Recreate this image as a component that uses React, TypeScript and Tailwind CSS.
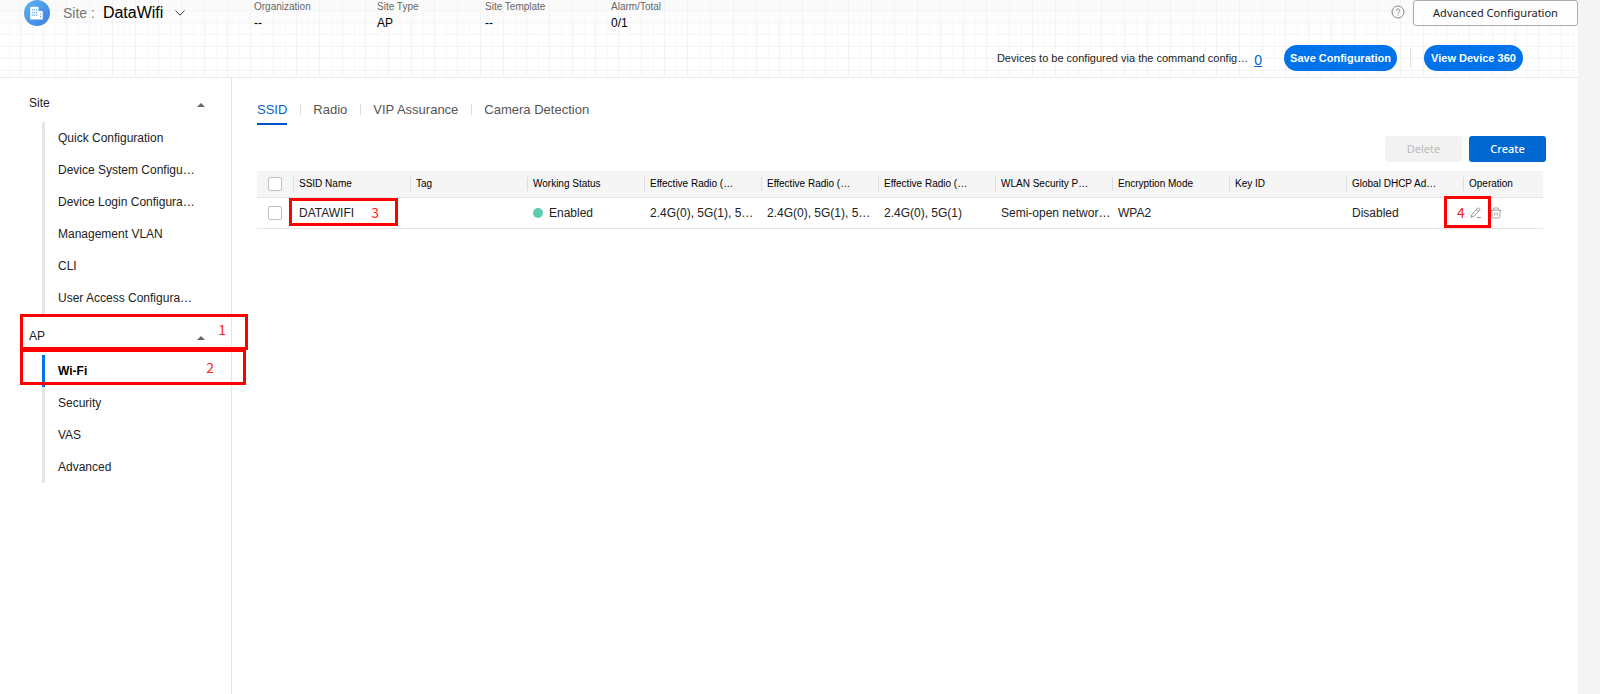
import { useState } from "react";
import type { ReactNode } from "react";

const facts = [
  { label: "Organization", value: "--", width: "w-[123px]" },
  { label: "Site Type", value: "AP", width: "w-[108px]" },
  { label: "Site Template", value: "--", width: "w-[126px]" },
  { label: "Alarm/Total", value: "0/1", width: "w-[100px]" },
];

const siteItems = [
  "Quick Configuration",
  "Device System Configu…",
  "Device Login Configura…",
  "Management VLAN",
  "CLI",
  "User Access Configura…",
];

const apItems = ["Wi-Fi", "Security", "VAS", "Advanced"];

const tabs = ["SSID", "Radio", "VIP Assurance", "Camera Detection"];

const columns = [
  "SSID Name",
  "Tag",
  "Working Status",
  "Effective Radio (…",
  "Effective Radio (…",
  "Effective Radio (…",
  "WLAN Security P…",
  "Encryption Mode",
  "Key ID",
  "Global DHCP Ad…",
  "Operation",
];

const gridLines =
  "bg-[linear-gradient(to_right,#f3f3f3_1px,transparent_1px),linear-gradient(to_right,#f8f8f8_1px,transparent_1px),linear-gradient(to_bottom,#f5f5f5_1px,transparent_1px),linear-gradient(to_bottom,#fafafa,#ffffff_50%)] bg-[size:23px_100%,23px_100%,100%_12px,100%_100%] bg-[position:20px_0,9px_0,0_10px,0_0]";

function SiteLogo() {
  return (
    <svg viewBox="0 0 26 26" className="size-[26px]" aria-hidden="true">
      <defs>
        <linearGradient id="logo" x1="0" y1="0" x2="1" y2="1">
          <stop offset="0" stopColor="#5fb4f0" />
          <stop offset="1" stopColor="#3a7ee4" />
        </linearGradient>
      </defs>
      <circle cx="13" cy="13" r="13" fill="url(#logo)" />
      <path d="M6.2 7.500q0-.8.800-.8h6.800q.8 0 .8.800v3.600h3.200q1 0 1 1v7.400H6.200z" fill="#fff" />
      <path
        d="M7.800 9.800h1.300M9.900 9.800h1.300M12 9.800h1.300M7.800 12.500h1.300M9.900 12.500h1.300M12 12.500h1.300M7.800 15.200h1.300M9.900 15.200h1.300M12 15.200h1.300M16 14h1.200M16 16.600h1.200"
        stroke="#5fa6ee"
        strokeWidth="1.200"
      />
    </svg>
  );
}

function HelpIcon() {
  return (
    <svg viewBox="0 0 14 14" className="size-[14px]" fill="none" stroke="#777" aria-hidden="true">
      <circle cx="7" cy="7" r="6" strokeWidth="0.900" />
      <path d="M5.200 5.600a1.800 1.700 0 1 1 2.700 1.500c-.6.400-.9.700-.9 1.400M7 9.600v1" strokeWidth="0.900" />
    </svg>
  );
}

function EditIcon() {
  return (
    <svg viewBox="0 0 12 12" className="size-3" fill="none" stroke="#888" strokeWidth="0.900" aria-hidden="true">
      <path d="M1.200 10.300l.8-2.900L7.600 1.200q.6-.6 1.200-.1l.8.700q.6.600.1 1.200L4 9.300zM6.600 2.500l2 1.800M6.800 10.500h4" />
    </svg>
  );
}

function TrashIcon() {
  return (
    <svg viewBox="0 0 12 12" className="size-3" fill="none" stroke="#999" strokeWidth="0.900" aria-hidden="true">
      <path d="M.8 3.200h10.400M3.500 3V1.800q0-.8.800-.8h3.400q.8 0 .8.800V3M1.700 3.200l.5 6.600q.1 1.200 1.200 1.200h5.200q1.100 0 1.200-1.200l.5-6.600M4.800 5.200v3.400M7.200 5.200v3.400" />
    </svg>
  );
}

function NavGroup({ title, children }: { title: string; children?: ReactNode }) {
  return (
    <button type="button" className="relative mb-px flex h-9 w-full items-center justify-between pr-[26px] pl-[29px] text-left text-xs text-[#222]">
      {title}
      <svg viewBox="0 0 8 4" className="mt-1 h-1 w-2" aria-hidden="true">
        <path d="M4 0l4 4H0z" fill="#666" />
      </svg>
      {children}
    </button>
  );
}

function Mark({ className, children }: { className: string; children: ReactNode }) {
  return (
    <span
      className={
        "pointer-events-none absolute z-10 border-[3px] border-[#ff0000] font-['Noto_Sans_CJK_SC',sans-serif] text-sm font-normal leading-4 text-[#ff2020] " +
        className
      }
    >
      {children}
    </span>
  );
}

function Check({ label }: { label: string }) {
  return (
    <input
      type="checkbox"
      aria-label={label}
      className="block size-[14px] appearance-none rounded-[2px] border border-[#c2c2c2] bg-white checked:bg-[#0067d1]"
    />
  );
}

export default function App() {
  const [tab, setTab] = useState("SSID");

  return (
    <div className="min-h-screen bg-[#f4f4f4] pr-[22px] font-['Liberation_Sans',Arial,sans-serif] text-xs text-[#222]">
      <div className="flex min-h-screen flex-col bg-white">
        <header className={"flex h-[78px] justify-between border-b border-[#e8e8e8] " + gridLines}>
          <div className="flex items-start">
            <div className="flex w-[254px] items-center pl-6">
              <SiteLogo />
              <span className="ml-[13px] text-sm text-[#777]">Site :</span>
              <button type="button" className="ml-2 flex items-center gap-3 text-base leading-6 text-black">
                DataWifi
                <svg viewBox="0 0 10 6" className="h-[6px] w-[10px]" fill="none" stroke="#444" aria-hidden="true">
                  <path d="M.5.500L5 5.200 9.500.500" />
                </svg>
              </button>
            </div>
            <dl className="flex">
              {facts.map((f) => (
                <div key={f.label} className={f.width}>
                  <dt className="text-[10px] leading-[13px] text-[#666]">{f.label}</dt>
                  <dd className="mt-[2px] text-xs leading-4 text-black">{f.value}</dd>
                </div>
              ))}
            </dl>
          </div>
          <div className="flex flex-col items-end">
            <div className="flex items-start gap-2">
              <button type="button" aria-label="Help" className="mt-[5px]">
                <HelpIcon />
              </button>
              <button
                type="button"
                className="h-[26px] w-[165px] rounded-[3px] border border-[#aaa] bg-white/60 font-['Noto_Sans',sans-serif] text-[11px] leading-5 text-[#222]"
              >
                Advanced Configuration
              </button>
            </div>
            <div className="mt-[19px] mr-[55px] flex items-center">
              <span className="text-[11px] whitespace-nowrap">Devices to be configured via the command config…</span>
              <a href="#devices" className="ml-[6px] pt-1 text-sm text-[#0067d1] underline">
                0
              </a>
              <button type="button" className="ml-[22px] h-[26px] w-[113px] rounded-full bg-[#0073ea] text-[11px] font-bold text-white">
                Save Configuration
              </button>
              <span className="ml-[13px] h-5 w-px bg-[#e0e0e0]" />
              <button type="button" className="ml-[13px] h-[26px] w-[99px] rounded-full bg-[#0073ea] text-[11px] font-bold text-white">
                View Device 360
              </button>
            </div>
          </div>
        </header>

        <div className="flex grow">
          <nav className="w-[232px] shrink-0 border-r border-[#e5e5e5] pt-[7px]">
            <NavGroup title="Site" />
            <ul className="ml-[42px] border-l-[3px] border-[#e5e5e5]">
              {siteItems.map((item) => (
                <li key={item}>
                  <a href="#site" className="block pl-[13px] leading-8 whitespace-nowrap">
                    {item}
                  </a>
                </li>
              ))}
            </ul>
            <div className="h-1" />
            <NavGroup title="AP">
              <Mark className="top-[-4px] left-5 h-9 w-[228px] pr-[19px] pt-1 text-right">1</Mark>
            </NavGroup>
            <ul className="ml-[42px]">
              {apItems.map((item) => (
                <li key={item} className="relative">
                  <a
                    href="#ap"
                    className={
                      "block border-l-[3px] pl-[13px] leading-8 " +
                      (item === "Wi-Fi" ? "border-[#0073ea] font-bold text-black" : "border-[#e5e5e5]")
                    }
                  >
                    {item}
                  </a>
                  {item === "Wi-Fi" && <Mark className="top-[-6px] left-[-22px] h-9 w-[226px] pr-[29px] pt-[7px] text-right">2</Mark>}
                </li>
              ))}
            </ul>
          </nav>

          <main className="min-w-0 grow pt-[21px] pr-8 pl-[25px]">
            <div role="tablist" className="flex items-start">
              {tabs.map((t, i) => (
                <div key={t} className="flex items-start">
                  {i > 0 && <span className="mr-3 ml-[13px] mt-[5px] h-[11px] w-px bg-[#ddd]" />}
                  <button
                    type="button"
                    role="tab"
                    aria-selected={tab === t}
                    onClick={() => setTab(t)}
                    className={
                      "h-[26px] border-b-2 pb-[2px] text-[13px] leading-[22px] " +
                      (tab === t ? "border-[#0052cc] text-[#0a5fd0]" : "border-transparent text-[#555]")
                    }
                  >
                    {t}
                  </button>
                </div>
              ))}
            </div>

            <div className="mt-[11px] flex justify-end gap-[7px] font-['Noto_Sans',sans-serif] text-[11px] leading-5">
              <button type="button" disabled className="h-[26px] w-[77px] rounded-[3px] bg-[#f2f2f2] text-[#bbb]">
                Delete
              </button>
              <button type="button" className="h-[26px] w-[77px] rounded-[3px] bg-[#0067d1] font-medium text-white">
                Create
              </button>
            </div>

            <div className="mt-[9px] pr-[3px]">
              <table className="w-full table-fixed border-collapse text-left">
                <colgroup>
                  <col className="w-9" />
                  {columns.map((c, i) => (
                    <col key={i} className={c === "Operation" ? "w-20" : ""} />
                  ))}
                </colgroup>
                <thead>
                  <tr className="h-[26px] border-b border-[#e5e5e5] bg-[#f5f5f5]">
                    <th className="pl-[11px]">
                      <Check label="Select all" />
                    </th>
                    {columns.map((c, i) => (
                      <th key={i} className="p-0 text-[10px] font-normal whitespace-nowrap text-black">
                        <div className="border-l border-[#ddd] pl-[5px] leading-[14px]">{c}</div>
                      </th>
                    ))}
                  </tr>
                </thead>
                <tbody>
                  <tr className="h-[31px] border-b border-[#e5e5e5] whitespace-nowrap">
                    <td className="pl-[11px]">
                      <Check label="Select DATAWIFI" />
                    </td>
                    <td className="relative pl-[6px]">
                      DATAWIFI
                      <Mark className="top-0 left-[-4px] h-7 w-[109px] pr-4 pt-[3px] text-right">3</Mark>
                    </td>
                    <td className="pl-[6px]" />
                    <td className="pl-[6px]">
                      <span className="flex items-center gap-[6px]">
                        <span className="size-[10px] rounded-full bg-[#5ecbb0]" />
                        Enabled
                      </span>
                    </td>
                    <td className="pl-[6px]">2.4G(0), 5G(1), 5…</td>
                    <td className="pl-[6px]">2.4G(0), 5G(1), 5…</td>
                    <td className="pl-[6px]">2.4G(0), 5G(1)</td>
                    <td className="pl-[6px]">Semi-open networ…</td>
                    <td className="pl-[6px]">WPA2</td>
                    <td className="pl-[6px]" />
                    <td className="pl-[6px]">Disabled</td>
                    <td className="relative pl-[7px]">
                      <span className="flex items-center gap-2">
                        <button type="button" aria-label="Edit">
                          <EditIcon />
                        </button>
                        <button type="button" aria-label="Delete row">
                          <TrashIcon />
                        </button>
                      </span>
                      <Mark className="top-[-2px] left-[-19px] h-8 w-[47px] pl-[10px] pt-[5px]">4</Mark>
                    </td>
                  </tr>
                </tbody>
              </table>
            </div>
          </main>
        </div>
      </div>
    </div>
  );
}
